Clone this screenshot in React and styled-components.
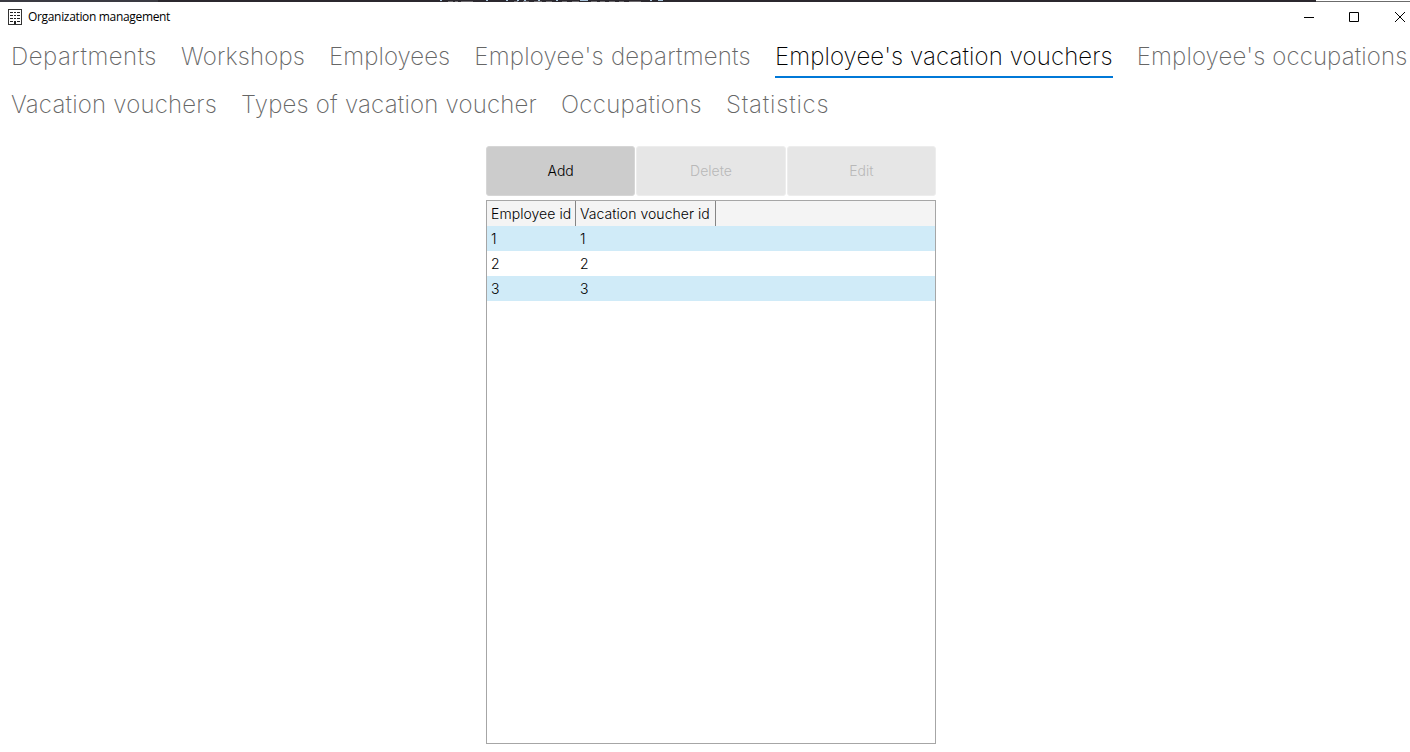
import React from "react";
import styled, { createGlobalStyle } from "styled-components";

const GlobalStyle = createGlobalStyle`
  * { box-sizing: border-box; }
  body { margin: 0; background: #fff; font-family: Inter, "Liberation Sans", sans-serif; overflow: hidden; }
`;

const Window = styled.div`
  display: flex;
  flex-direction: column;
  width: 1410px;
  height: 752px;
  background: #fff;
  overflow: hidden;
`;

const Backdrop = styled.div`
  display: flex;
  height: 2px;
  flex: none;
  overflow: hidden;
  background: linear-gradient(to right, #3a3a42 158px, #2b282e 158px, #2b282e 1316px, transparent 1316px);
`;

const CodeMarks = styled.svg`
  margin-left: 438px;
`;

const EdgeLine = styled.div`
  width: 94px;
  height: 1px;
  margin: 1px 0 0 auto;
  background: #6b6b6b;
`;

const TitleBar = styled.header`
  display: flex;
  align-items: center;
  height: 29px;
  flex: none;
  padding-left: 8px;
`;

const Title = styled.span`
  margin-left: 6px;
  font: 12px/16px "Open Sans", "Noto Sans", sans-serif;
  letter-spacing: -0.33px;
  color: #000;
  flex: 1;
`;

const Controls = styled.div`
  display: flex;
  gap: 34px;
  padding-right: 4px;
`;

const Tabs = styled.nav`
  display: flex;
  flex-wrap: wrap;
  height: 96px;
  flex: none;
  margin: 0 -20px 0 -1px;
`;

const Tab = styled.div`
  display: flex;
  height: 48px;
  padding: 0 12px;
  font-size: 24px;
  font-weight: 200;
  letter-spacing: ${(p) => p.$tracking}px;
  line-height: 52px;
  white-space: nowrap;
  color: ${(p) => (p.$active ? "#000" : "#666")};
`;

const TabLabel = styled.span`
  height: 47px;
  border-bottom: 2px solid ${(p) => (p.$active ? "#0078d7" : "transparent")};
`;

const Panel = styled.main`
  display: flex;
  flex-direction: column;
  width: 450px;
  margin: 19px 0 0 486px;
`;

const Toolbar = styled.div`
  display: grid;
  grid-template-columns: repeat(3, 149.3px);
  column-gap: 1px;
  height: 50px;
`;

const Button = styled.button`
  height: 49.5px;
  border: 1px solid ${(p) => (p.disabled ? "#ededed" : "#d6d6d6")};
  border-radius: 3px;
  padding: 0;
  font: 300 14px Inter, sans-serif;
  background: ${(p) => (p.disabled ? "#e6e6e6" : "#ccc")};
  color: ${(p) => (p.disabled ? "#b8b8b8" : "#000")};
`;

const Grid = styled.div`
  height: 544px;
  margin-top: 4px;
  border: 1px solid #a6a6a6;
  font-size: 14px;
  font-weight: 300;
`;

const Row = styled.div`
  display: flex;
  height: 25px;
  background: ${(p) => (p.$header ? "#f4f4f4" : p.$striped ? "#d0ebf8" : "#fff")};
`;

const Cell = styled.div`
  width: ${(p) => p.$width}px;
  padding-left: 4px;
  line-height: 26px;
  letter-spacing: 0.05px;
  white-space: nowrap;
  border-right: 1px solid ${(p) => (p.$header ? "#858585" : "transparent")};
`;

const tabs = [
  { name: "Departments", tracking: 0.5 },
  { name: "Workshops", tracking: 0.16 },
  { name: "Employees", tracking: 0.05 },
  { name: "Employee's departments", tracking: 0.23 },
  { name: "Employee's vacation vouchers", tracking: 0.1 },
  { name: "Employee's occupations", tracking: 0.12 },
  { name: "Vacation vouchers", tracking: 0.2 },
  { name: "Types of vacation voucher", tracking: 0.2 },
  { name: "Occupations", tracking: 0.28 },
  { name: "Statistics", tracking: 0.8 },
];
const records = [[1, 1], [2, 2], [3, 3]];

function BuildingIcon() {
  return (
    <svg width="14" height="16" viewBox="0 0 14 16" shapeRendering="crispEdges">
      <path d="M.5.5h13v15H.5z" fill="#fff" stroke="#333" />
      <path d="M2 3h3v1H2zM6 3h2v1H6zM9 3h3v1H9zM2 6h3v1H2zM6 6h2v1H6zM9 6h3v1H9zM2 9h3v1H2zM6 9h2v1H6zM9 9h3v1H9zM2 12h3v1H2zM9 12h3v1H9zM6 12h2v3H6z" fill="#222" />
    </svg>
  );
}

export default function App() {
  return (
    <>
      <GlobalStyle />
      <Window>
        <Backdrop>
          <CodeMarks width="230" height="2" shapeRendering="crispEdges">
            <path d="M2 .5h2M48 .5h2M68 .5h2M79 .5h2M86 .5h2M100 .5h2M118 .5h2M142 .5h8M212 .5h2M220 .5h5" stroke="#a9c4dc" />
            <path d="M10 1.5h5M17 1.5h3M23 1.5h12M76 1.5h4M85 1.5h6M96 1.5h8M108 1.5h6M124 1.5h5M134 1.5h7M153 1.5h6M162 1.5h5M171 1.5h6M181 1.5h5M191 1.5h12" stroke="#6c696d" />
          </CodeMarks>
          <EdgeLine />
        </Backdrop>
        <TitleBar>
          <BuildingIcon />
          <Title>Organization management</Title>
          <Controls>
            <svg width="12" height="12"><path d="M2 6.5h10" stroke="#000" /></svg>
            <svg width="12" height="12"><path d="M1.5 1.5h9v9h-9z" fill="none" stroke="#000" /></svg>
            <svg width="12" height="12"><path d="M1 1l10 10M11 1L1 11" stroke="#000" /></svg>
          </Controls>
        </TitleBar>
        <Tabs>
          {tabs.map(({ name, tracking }, i) => (
            <Tab key={name} $active={i === 4} $tracking={tracking}>
              <TabLabel $active={i === 4}>{name}</TabLabel>
            </Tab>
          ))}
        </Tabs>
        <Panel>
          <Toolbar>
            <Button>Add</Button>
            <Button disabled>Delete</Button>
            <Button disabled>Edit</Button>
          </Toolbar>
          <Grid>
            <Row $header>
              <Cell $header $width={89}>Employee id</Cell>
              <Cell $header $width={140}>Vacation voucher id</Cell>
            </Row>
            {records.map(([employee, voucher], i) => (
              <Row key={employee} $striped={i % 2 === 0}>
                <Cell $width={89}>{employee}</Cell>
                <Cell $width={140}>{voucher}</Cell>
              </Row>
            ))}
          </Grid>
        </Panel>
      </Window>
    </>
  );
}
